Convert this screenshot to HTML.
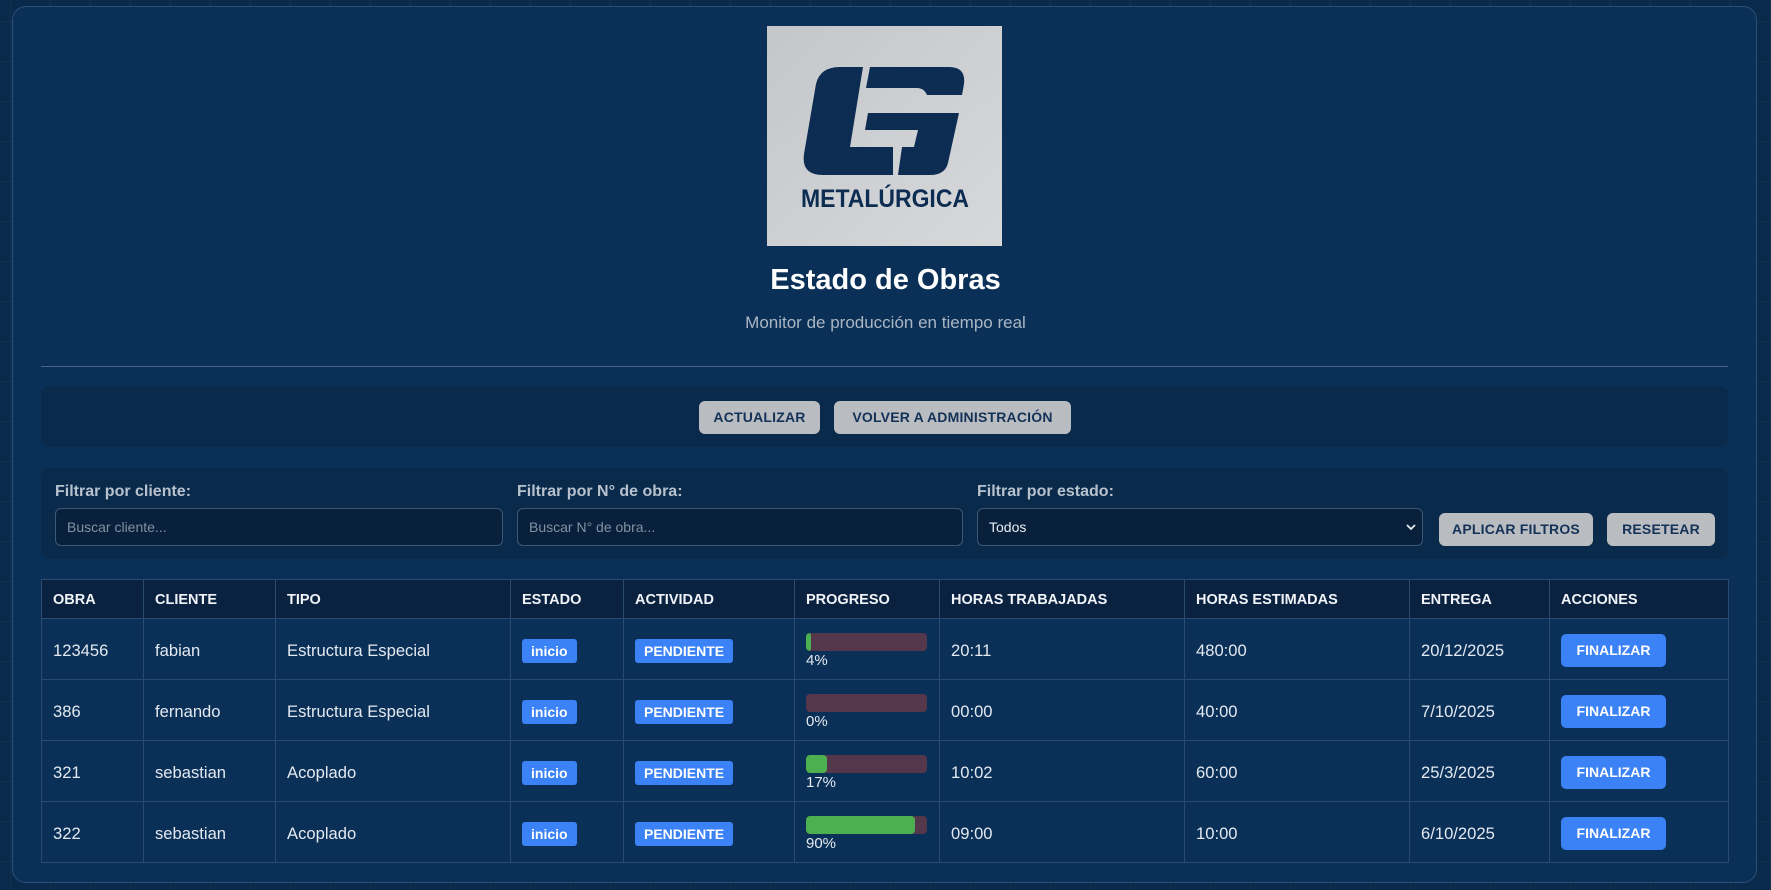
<!DOCTYPE html>
<html><head><meta charset="utf-8">
<style>
*{box-sizing:border-box;margin:0;padding:0}
html,body{width:1771px;height:890px;overflow:hidden}
body{background-color:#0a2a4c;background-image:linear-gradient(rgba(255,255,255,0.035) 1px,transparent 1px),linear-gradient(90deg,rgba(255,255,255,0.035) 1px,transparent 1px);background-size:40px 40px;background-position:10px 21px;font-family:"Liberation Sans",sans-serif;color:#e8edf3;position:relative}
.card{position:absolute;left:12px;top:6px;width:1745px;height:877px;background:#0b3057;border:1px solid #2a4f78;border-radius:14px}
.abs{position:absolute}
.logo{left:767px;top:26px;width:235px;height:220px}
h1{position:absolute;left:0;width:1771px;top:264px;text-align:center;font-size:29px;font-weight:bold;color:#fff}
.sub{position:absolute;left:0;width:1771px;top:313px;text-align:center;font-size:17px;color:#aab6c4}
.hr{left:41px;top:366px;width:1687px;height:1px;background:#4a6585}
.panel{background:#0a2a4b;border-radius:8px}
.btn{position:absolute;background:#b9bcc0;color:#143257;font-weight:bold;font-size:14px;border-radius:6px;text-align:center;letter-spacing:0.2px}
.lbl{position:absolute;top:483px;font-size:16px;font-weight:bold;color:#b8c2ce}
.inp{position:absolute;top:508px;height:38px;background:#08203b;border:1px solid #3d5875;border-radius:6px;font-size:14px;color:#8391a2;padding:10px 11px}
table{position:absolute;left:41px;top:579px;width:1687px;border-collapse:collapse;table-layout:fixed}
th,td{border:1px solid #2a4a6e;text-align:left;padding:0 11px}
th{background:#0a2240;height:39px;font-size:14.5px;font-weight:bold;color:#f0f3f7;padding-top:2px}
td{height:61px;font-size:16.6px;color:#e3e9f0;padding-top:3px}
.b{display:inline-block;background:#3b82f6;color:#fff;font-weight:bold;font-size:14px;border-radius:3px;padding:4px 9px}
.pg{width:121px;height:18px;background:#55374b;border-radius:4px;overflow:hidden;margin-top:1px}
.pg i{display:block;height:100%;background:#4caf50;border-radius:4px}
.pt{font-size:15px;margin-top:1px}
.fin{display:inline-block;background:#3b82f6;color:#fff;font-weight:bold;font-size:14px;border-radius:5px;width:105px;height:33px;line-height:33px;text-align:center}
</style></head><body>
<div class="card"></div>
<svg class="abs logo" viewBox="0 0 235 220">
<defs><linearGradient id="g" x1="0" y1="0" x2="1" y2="1"><stop offset="0" stop-color="#c4c7ca"/><stop offset="1" stop-color="#d6d8da"/></linearGradient></defs>
<rect width="235" height="220" fill="url(#g)"/>
<path d="M73 41 L96 41 L83 121 L126 121 L126 149 L56 149 Q34 149 37 128 L49 58 Q53 41 73 41Z" fill="#0c2c52"/>
<path d="M103 41 L182 41 Q199 41 197 58 L195 69 L160 69 Q157 62 150 62 L99 62 Z" fill="#0c2c52"/>
<path d="M101 87 L192 87 L181 137 Q178 149 163 149 L131 149 L135 121 L147 121 L151 104 L98 104 Z" fill="#0c2c52"/>
<text x="118" y="181" text-anchor="middle" font-family="Liberation Sans, sans-serif" font-weight="bold" font-size="25" fill="#0c2c52" textLength="168" lengthAdjust="spacingAndGlyphs">METALÚRGICA</text>
</svg>
<h1>Estado de Obras</h1>
<div class="sub">Monitor de producción en tiempo real</div>
<div class="abs hr"></div>
<div class="abs panel" style="left:41px;top:386px;width:1687px;height:61px"></div>
<div class="btn" style="left:699px;top:401px;width:121px;height:33px;line-height:33px">ACTUALIZAR</div>
<div class="btn" style="left:834px;top:401px;width:237px;height:33px;line-height:33px">VOLVER A ADMINISTRACIÓN</div>
<div class="abs panel" style="left:41px;top:468px;width:1687px;height:91px"></div>
<div class="lbl" style="left:55px">Filtrar por cliente:</div>
<div class="lbl" style="left:517px">Filtrar por N° de obra:</div>
<div class="lbl" style="left:977px">Filtrar por estado:</div>
<div class="inp" style="left:55px;width:448px">Buscar cliente...</div>
<div class="inp" style="left:517px;width:446px">Buscar N° de obra...</div>
<div class="inp" style="left:977px;width:446px;color:#e8edf3">Todos<svg style="position:absolute;right:6px;top:14px" width="10" height="8" viewBox="0 0 10 8"><path d="M1 2 L5 6 L9 2" stroke="#e8edf3" stroke-width="1.8" fill="none"/></svg></div>
<div class="btn" style="left:1439px;top:513px;width:154px;height:33px;line-height:33px">APLICAR FILTROS</div>
<div class="btn" style="left:1607px;top:513px;width:108px;height:33px;line-height:33px">RESETEAR</div>
<table>
<colgroup><col style="width:102px"><col style="width:132px"><col style="width:235px"><col style="width:113px"><col style="width:171px"><col style="width:145px"><col style="width:245px"><col style="width:225px"><col style="width:140px"><col style="width:179px"></colgroup>
<tr><th>OBRA</th><th>CLIENTE</th><th>TIPO</th><th>ESTADO</th><th>ACTIVIDAD</th><th>PROGRESO</th><th>HORAS TRABAJADAS</th><th>HORAS ESTIMADAS</th><th>ENTREGA</th><th>ACCIONES</th></tr>
<tr><td>123456</td><td>fabian</td><td>Estructura Especial</td><td><span class="b">inicio</span></td><td><span class="b">PENDIENTE</span></td><td><div class="pg"><i style="width:4%"></i></div><div class="pt">4%</div></td><td>20:11</td><td>480:00</td><td>20/12/2025</td><td><span class="fin">FINALIZAR</span></td></tr>
<tr><td>386</td><td>fernando</td><td>Estructura Especial</td><td><span class="b">inicio</span></td><td><span class="b">PENDIENTE</span></td><td><div class="pg"><i style="width:0%"></i></div><div class="pt">0%</div></td><td>00:00</td><td>40:00</td><td>7/10/2025</td><td><span class="fin">FINALIZAR</span></td></tr>
<tr><td>321</td><td>sebastian</td><td>Acoplado</td><td><span class="b">inicio</span></td><td><span class="b">PENDIENTE</span></td><td><div class="pg"><i style="width:17%"></i></div><div class="pt">17%</div></td><td>10:02</td><td>60:00</td><td>25/3/2025</td><td><span class="fin">FINALIZAR</span></td></tr>
<tr><td>322</td><td>sebastian</td><td>Acoplado</td><td><span class="b">inicio</span></td><td><span class="b">PENDIENTE</span></td><td><div class="pg"><i style="width:90%"></i></div><div class="pt">90%</div></td><td>09:00</td><td>10:00</td><td>6/10/2025</td><td><span class="fin">FINALIZAR</span></td></tr>
</table>
</body></html>
